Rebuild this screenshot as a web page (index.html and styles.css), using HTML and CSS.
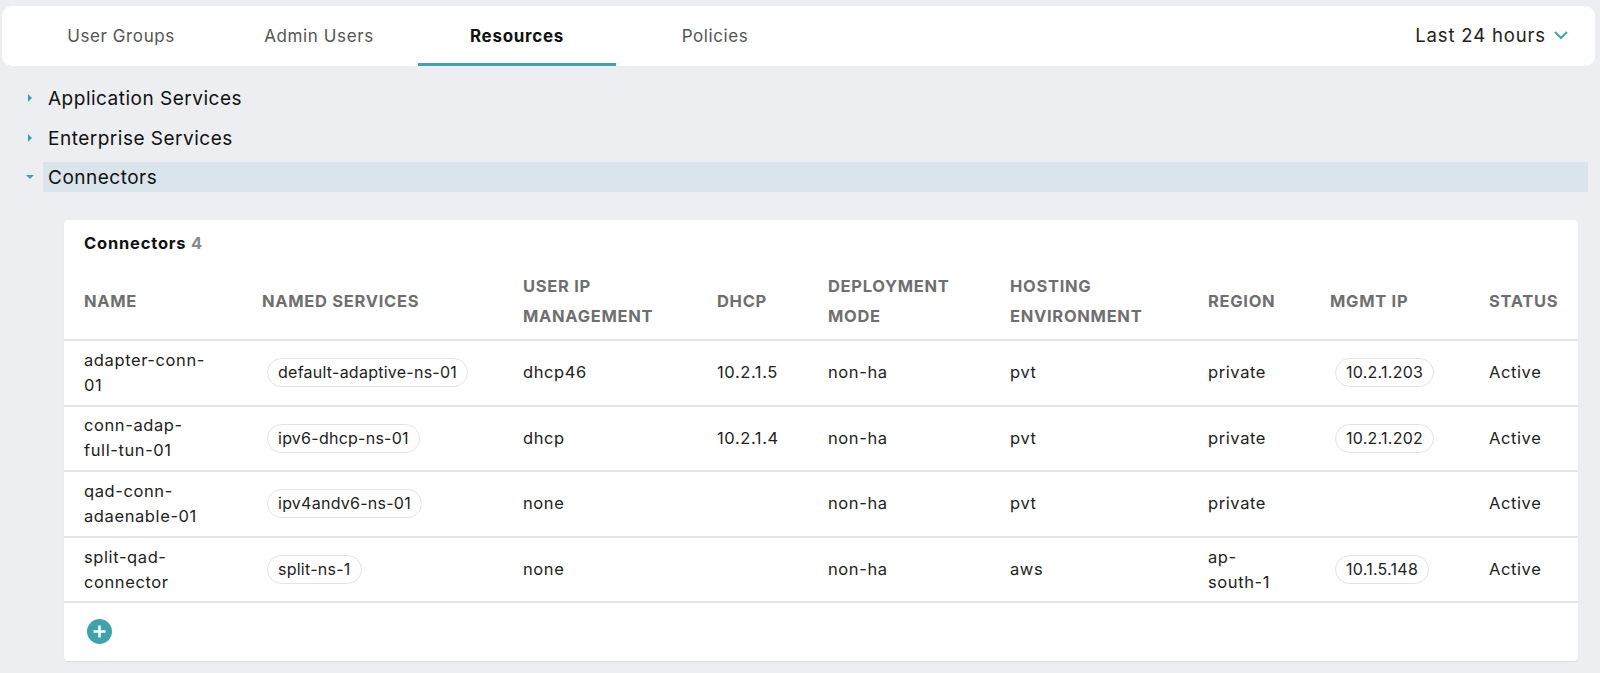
FILE: index.html
```html
<!DOCTYPE html>
<html lang="en">
<head>
    <meta charset="UTF-8">
    <title>Resources</title>
    <link rel="stylesheet" href="styles.css">
</head>
<body>
    <div class="topbar">
        <div class="tabs">
            <div class="tab">User Groups</div>
            <div class="tab">Admin Users</div>
            <div class="tab active">Resources</div>
            <div class="tab">Policies</div>
        </div>
        <div class="range">
            Last 24 hours
            <svg class="chevron" width="16" height="10" viewBox="0 0 16 10"><path d="M2 2l6 6 6-6" fill="none" stroke="#3fa3ab" stroke-width="2"/></svg>
        </div>
    </div>

    <div class="section">
        <span class="arrow arrow-right"></span>
        <div class="section-title">Application Services</div>
    </div>
    <div class="section">
        <span class="arrow arrow-right"></span>
        <div class="section-title">Enterprise Services</div>
    </div>
    <div class="section">
        <span class="arrow arrow-down"></span>
        <div class="section-title open">Connectors</div>
    </div>

    <div class="card">
        <h3>Connectors <span class="count">4</span></h3>
        <table>
            <thead>
                <tr>
                    <th class="col-name">NAME</th>
                    <th class="col-services">NAMED SERVICES</th>
                    <th class="col-ip">USER IP MANAGEMENT</th>
                    <th class="col-dhcp">DHCP</th>
                    <th class="col-mode">DEPLOYMENT MODE</th>
                    <th class="col-host">HOSTING ENVIRONMENT</th>
                    <th class="col-region">REGION</th>
                    <th class="col-mgmt">MGMT IP</th>
                    <th class="col-status">STATUS</th>
                </tr>
            </thead>
            <tbody>
                <tr>
                    <td>adapter-conn-01</td>
                    <td><span class="pill">default-adaptive-ns-01</span></td>
                    <td>dhcp46</td>
                    <td>10.2.1.5</td>
                    <td>non-ha</td>
                    <td>pvt</td>
                    <td class="col-region">private</td>
                    <td><span class="pill">10.2.1.203</span></td>
                    <td>Active</td>
                </tr>
                <tr>
                    <td>conn-adap-full-tun-01</td>
                    <td><span class="pill">ipv6-dhcp-ns-01</span></td>
                    <td>dhcp</td>
                    <td>10.2.1.4</td>
                    <td>non-ha</td>
                    <td>pvt</td>
                    <td class="col-region">private</td>
                    <td><span class="pill">10.2.1.202</span></td>
                    <td>Active</td>
                </tr>
                <tr>
                    <td>qad-conn-adaenable-01</td>
                    <td><span class="pill">ipv4andv6-ns-01</span></td>
                    <td>none</td>
                    <td></td>
                    <td>non-ha</td>
                    <td>pvt</td>
                    <td class="col-region">private</td>
                    <td></td>
                    <td>Active</td>
                </tr>
                <tr>
                    <td>split-qad-connector</td>
                    <td><span class="pill">split-ns-1</span></td>
                    <td>none</td>
                    <td></td>
                    <td>non-ha</td>
                    <td>aws</td>
                    <td class="col-region">ap-south-1</td>
                    <td><span class="pill">10.1.5.148</span></td>
                    <td>Active</td>
                </tr>
            </tbody>
        </table>
        <div class="card-foot">
            <svg width="25" height="25" viewBox="0 0 25 25"><circle cx="12.500" cy="12.500" r="12.500" fill="#3fa3ab"/><path d="M12.500 6.500v12M6.500 12.500h12" stroke="#fff" stroke-width="2.600"/></svg>
        </div>
    </div>
</body>
</html>
```

FILE: styles.css
```css
html, body {
    margin: 0;
    padding: 0;
}
body {
    font-family: Inter, "Liberation Sans", sans-serif;
    background-color: #edeef2;
    color: #111;
    padding: 6px 5px 0 2px;
    height: 667px;
    overflow: hidden;
}
.topbar {
    display: flex;
    justify-content: space-between;
    height: 60px;
    background: white;
    border-radius: 10px;
    margin-bottom: 17px;
}
.tabs {
    display: flex;
    margin-left: 20px;
}
.tab {
    box-sizing: border-box;
    width: 198px;
    height: 60px;
    line-height: 60px;
    text-align: center;
    font-size: 17px;
    letter-spacing: 0.6px;
    color: #555;
}
.tab.active {
    color: #111;
    font-weight: 700;
    letter-spacing: 0.7px;
    border-bottom: 3px solid #3fa3ab;
}
.range {
    display: flex;
    align-items: center;
    gap: 7px;
    font-size: 18.500px;
    letter-spacing: 0.85px;
    padding: 0 26px 2px 0;
    color: #222;
}
.section {
    display: flex;
    align-items: center;
    height: 30px;
    margin: 0 7px 9.500px 0;
}
.arrow {
    width: 0;
    height: 0;
}
.arrow-right {
    margin: 0 11px 0 26px;
    border-top: 4px solid transparent;
    border-bottom: 4px solid transparent;
    border-left: 4px solid #3fa3ab;
}
.arrow-down {
    margin: 0 9px 0 24px;
    border-left: 4px solid transparent;
    border-right: 4px solid transparent;
    border-top: 4px solid #3fa3ab;
}
.section-title {
    flex: 1;
    box-sizing: border-box;
    height: 30px;
    font-size: 19px;
    letter-spacing: 0.5px;
    line-height: 30px;
    padding: 1px 0 0 5px;
    color: #111;
}
.section-title.open {
    background-color: #d9e5ea;
}
.card {
    background: white;
    margin: 28px 17px 0 62px;
    border-radius: 4px;
    box-shadow: 0 1px 1px rgba(0, 0, 0, 0.08);
    height: 441px;
}
.card h3 {
    margin: 0;
    padding: 13px 20px 0;
    font-size: 16.500px;
    letter-spacing: 0.8px;
    line-height: 20px;
    font-weight: 700;
    color: #111;
}
.count {
    color: #8a8a8a;
}
table {
    width: 100%;
    border-collapse: collapse;
    table-layout: fixed;
}
th {
    font-size: 16.500px;
    letter-spacing: 0.7px;
    font-weight: 700;
    line-height: 29.500px;
    color: #6f6f6f;
    text-align: left;
    padding: 19px 16px 8px 0;
    vertical-align: middle;
    border-bottom: 2px solid #e4e5e7;
}
td {
    font-size: 16.500px;
    letter-spacing: 0.6px;
    line-height: 25px;
    height: 63.600px;
    padding: 0 16px 0 0;
    vertical-align: middle;
    color: #222;
    border-bottom: 2px solid #e4e5e7;
}
th:first-child, td:first-child {
    padding-left: 20px;
    padding-right: 53px;
}
.col-name {
    width: 125px;
}
.col-services {
    width: 245px;
}
.col-ip {
    width: 178px;
}
.col-dhcp {
    width: 95px;
}
.col-mode {
    width: 166px;
}
.col-host {
    width: 182px;
}
th.col-region, td.col-region {
    width: 76px;
    padding-right: 46px;
}
.col-mgmt {
    width: 143px;
}
.pill {
    display: inline-block;
    font-size: 16px;
    letter-spacing: 0.25px;
    line-height: 27px;
    padding: 0 10px;
    margin-left: 5px;
    border: 1px solid #e2e3e5;
    border-radius: 15px;
}
.card-foot {
    padding: 16px 0 0 22.500px;
}
```
